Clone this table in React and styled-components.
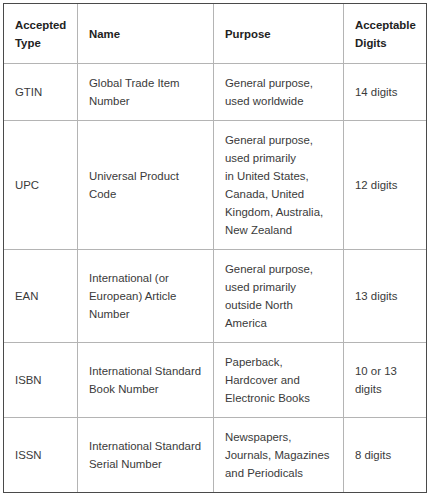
import React from "react";
import styled, { createGlobalStyle } from "styled-components";

const rows = [
  {
    type: "GTIN",
    name: ["Global Trade Item", "Number"],
    purpose: ["General purpose,", "used worldwide"],
    digits: ["14 digits"],
  },
  {
    type: "UPC",
    name: ["Universal Product", "Code"],
    purpose: [
      "General purpose,",
      "used primarily",
      "in United States,",
      "Canada, United",
      "Kingdom, Australia,",
      "New Zealand",
    ],
    digits: ["12 digits"],
  },
  {
    type: "EAN",
    name: ["International (or", "European) Article", "Number"],
    purpose: ["General purpose,", "used primarily", "outside North", "America"],
    digits: ["13 digits"],
  },
  {
    type: "ISBN",
    name: ["International Standard", "Book Number"],
    purpose: ["Paperback,", "Hardcover and", "Electronic Books"],
    digits: ["10 or 13", "digits"],
  },
  {
    type: "ISSN",
    name: ["International Standard", "Serial Number"],
    purpose: ["Newspapers,", "Journals, Magazines", "and Periodicals"],
    digits: ["8 digits"],
  },
];

const Lines = ({ items }) =>
  items.map((line, i) => (
    <React.Fragment key={i}>
      {i > 0 && <br />}
      {line}
    </React.Fragment>
  ));

const App = () => {
  return (
    <>
      <GlobalStyle />
      <StyledPage>
        <StyledTable>
          <colgroup>
            <col style={{ width: 74 }} />
            <col style={{ width: 136 }} />
            <col style={{ width: 130 }} />
            <col style={{ width: 82 }} />
          </colgroup>
          <thead>
            <tr>
              <StyledHead>
                Accepted
                <br />
                Type
              </StyledHead>
              <StyledHead>Name</StyledHead>
              <StyledHead>Purpose</StyledHead>
              <StyledHead>
                Acceptable
                <br />
                Digits
              </StyledHead>
            </tr>
          </thead>
          <tbody>
            {rows.map((row) => (
              <tr key={row.type}>
                <StyledCell>{row.type}</StyledCell>
                <StyledCell>
                  <Lines items={row.name} />
                </StyledCell>
                <StyledCell>
                  <Lines items={row.purpose} />
                </StyledCell>
                <StyledCell>
                  <Lines items={row.digits} />
                </StyledCell>
              </tr>
            ))}
          </tbody>
        </StyledTable>
      </StyledPage>
    </>
  );
};

const GlobalStyle = createGlobalStyle`
  body {
    margin: 0;
    background: #fff;
    font-family: "Liberation Sans", Arial, sans-serif;
  }
`;

const StyledPage = styled.div`
  padding: 3px;
`;

const StyledTable = styled.table`
  width: 424px;
  table-layout: fixed;
  border-collapse: separate;
  border-spacing: 0;
  border: 1px solid #4a4a4a;
  font-size: 11.4px;
  line-height: 18px;
  color: #3a3a3a;

  th,
  td {
    box-sizing: border-box;
    border-right: 1px solid #b4b4b4;
    border-bottom: 1px solid #b4b4b4;
    vertical-align: middle;
    text-align: left;
    white-space: nowrap;
  }
  th:last-child,
  td:last-child {
    border-right: none;
  }
  tbody tr:last-child td {
    border-bottom: none;
  }
`;

const StyledHead = styled.th`
  padding: 12px 8px 11px 11px;
  font-weight: bold;
  color: #222;
`;

const StyledCell = styled.td`
  padding: 10px 8px 10px 11px;
`;

export default App;
